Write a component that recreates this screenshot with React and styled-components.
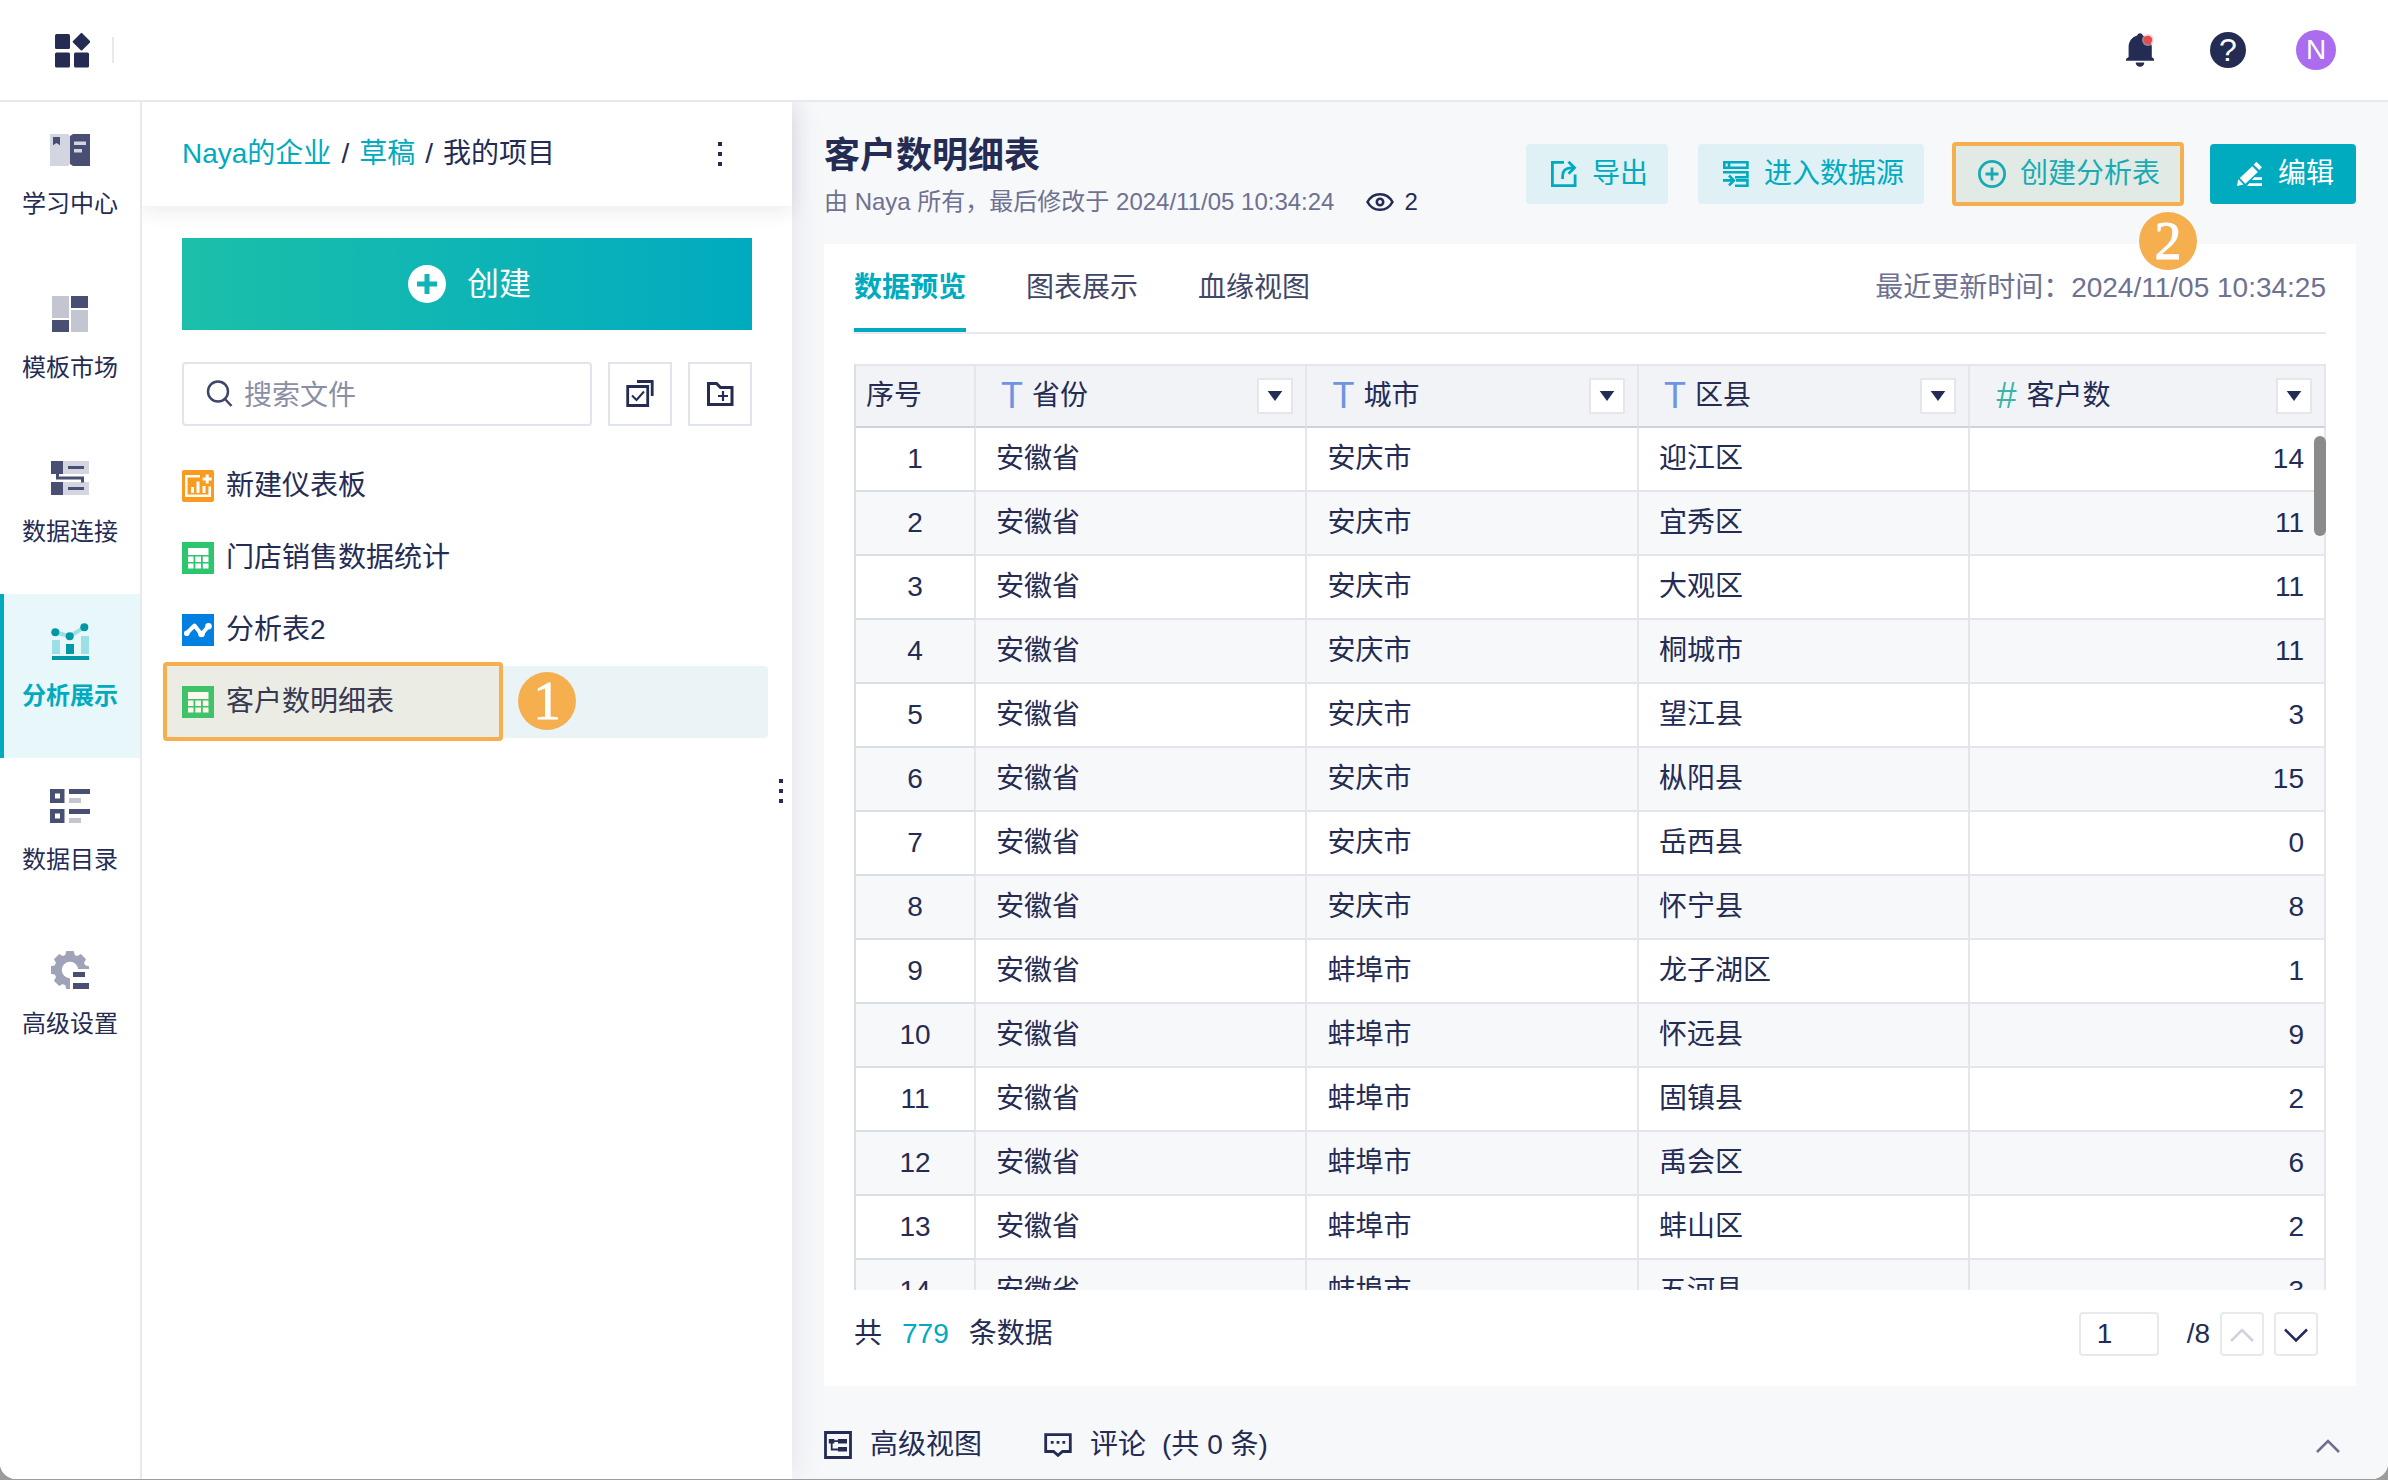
import React, { useState } from 'react';
import styled, { createGlobalStyle } from 'styled-components';

const GlobalStyle = createGlobalStyle`
    *{
        box-sizing: border-box;
    }
    body{
        margin: 0;
        background-color: #9c9c9c;
        color: #242c54;
        font-family: "Liberation Sans", "Noto Sans CJK SC", sans-serif;
        font-size: 28px;
        line-height: 40px;
    }
    button, input{
        font: inherit;
        color: inherit;
    }
    button{
        padding: 0;
        border: 0;
        background: none;
        cursor: pointer;
    }
    a{
        color: inherit;
        text-decoration: none;
    }
    svg{
        display: block;
        flex: none;
    }
`;

const DARK = '#484f72'
const LIGHT = '#d3d6e0'
const GREY = '#c3c5d1'

// ---- icons ----

const LogoIcon = () => (
    <svg width="36" height="36" viewBox="0 0 36 36" fill="#242c54">
        <rect x="1" y="2" width="15" height="15" rx="1.5" />
        <rect x="1" y="20.5" width="15" height="15" rx="1.5" />
        <rect x="20" y="20.5" width="15" height="15" rx="1.5" />
        <rect x="21" y="3.2" width="13" height="13" rx="1" transform="rotate(45 27.5 9.7)" />
    </svg>
)

const BellIcon = () => (
    <svg width="40" height="40" viewBox="0 0 40 40">
        <path fill="#242c54" d="M20 3.2c1.5 0 2.6 1 2.8 2.4 5.300 1.300 9 5.800 9 11.400v10l2.200 2v1.800H6V29l2.600-2V17c0-5.600 3.600-10.100 8.600-11.400.2-1.400 1.300-2.400 2.800-2.400z" />
        <path fill="#242c54" d="M15.700 32.500h8.600a4.300 4.300 0 0 1-8.600 0z" />
        <circle cx="28" cy="10" r="6" fill="#f5b9bf" opacity=".6" />
        <circle cx="28" cy="10" r="4.200" fill="#e8494d" />
    </svg>
)

const LearnIcon = () => (
    <svg width="40" height="40" viewBox="0 0 40 40">
        <path fill={LIGHT} d="M0 4h18l2 2v28l-2 2H0z" />
        <path fill={DARK} d="M40.500 4H23l-3 2v28l3 2h17.500z" />
        <path fill={DARK} d="M3 7h7v8.200L6.500 13 3 15.200z" />
        <path fill={LIGHT} d="M24 11.500h12V15H24zM24 19h8v3.500h-8z" />
    </svg>
)

const TemplateIcon = () => (
    <svg width="40" height="40" viewBox="0 0 40 40">
        <path fill={GREY} d="M2 2h17v22H2zM21 16h17v22H21z" />
        <path fill={DARK} d="M21 2h17v12H21zM2 26h17v12H2z" />
    </svg>
)

const ConnectIcon = () => (
    <svg width="40" height="40" viewBox="0 0 40 40">
        <path fill={LIGHT} d="M13 3h26v13H13zM13 24h26v13H13z" />
        <path fill={DARK} d="M1 3h12v13H1zM1 24h12v13H1zM18 8h16v3H18zM18 29h16v3H18z" />
        <path stroke={DARK} strokeWidth="3" fill="none" d="M7.500 15v5h25v4.500" />
    </svg>
)

const AnalysisIcon = () => (
    <svg width="40" height="40" viewBox="0 0 40 40">
        <path fill="#9ce0e6" d="M2 18h8v14H2zM31 14h8v18h-8z" />
        <path stroke="#9ce0e6" strokeWidth="4" fill="none" d="M5.300 10.300l14.400 4 14.600-9" />
        <path fill="#0097a7" d="M16 22h8v10h-8zM2 34h37v4H2z" />
        <circle cx="5.300" cy="10.300" r="4" fill="#0097a7" />
        <circle cx="19.700" cy="14.300" r="4" fill="#0097a7" />
        <circle cx="34.300" cy="5.300" r="4" fill="#0097a7" />
    </svg>
)

const CatalogIcon = () => (
    <svg width="40" height="40" viewBox="0 0 40 40">
        <path fill={DARK} fillRule="evenodd" d="M0 3h14.500v14H0zM5 7.500v5h5v-5zM0 23h14.500v14H0zM5 27.500v5h5v-5z" />
        <path fill={DARK} d="M19 3h21v5H19zM19 23h21v5H19z" />
        <path fill={GREY} d="M19 12h12v5H19zM19 32h12v5H19z" />
    </svg>
)

const SettingsIcon = () => (
    <svg width="40" height="40" viewBox="0 0 40 40">
        <circle cx="20" cy="20" r="12" fill="none" stroke="#a0a3b8" strokeWidth="7.500" />
        {[0, 45, 90, 135, 180, 225, 270, 315].map(angle => (
            <path key={angle} fill="#a0a3b8" d="M15 6l1.300-5h7.400L25 6z" transform={`rotate(${angle} 20 20)`} />
        ))}
        <path fill="#fff" d="M20 19h20v21H20z" />
        <path fill={DARK} d="M23 22h12v5H23zM23 33h16v6H23z" />
    </svg>
)

const MoreIcon = () => (
    <svg width="28" height="28" viewBox="0 0 28 28" fill="#242c54">
        <path d="M12 2h4v4h-4zM12 12h4v4h-4zM12 22h4v4h-4z" />
    </svg>
)

const CreateIcon = () => (
    <svg width="40" height="40" viewBox="0 0 40 40">
        <circle cx="20" cy="20" r="19" fill="#fff" />
        <path stroke="#0fb5b4" strokeWidth="5" d="M20 10v20M10 20h20" />
    </svg>
)

const SearchIcon = () => (
    <svg width="28" height="28" viewBox="0 0 28 28" fill="none" stroke="#3f4668" strokeWidth="2.500">
        <circle cx="12" cy="11.500" r="10" />
        <path d="M18.500 18.500l7 7.500" />
    </svg>
)

const BatchIcon = () => (
    <svg width="28" height="28" viewBox="0 0 28 28" fill="none" stroke="#242c54">
        <path strokeWidth="2.800" d="M1.700 6.500h20v19h-20zM11 1.500h15.200V16" />
        <path strokeWidth="2" d="M6 15.500l4.500 4.500 7.500-8.500" />
    </svg>
)

const FolderIcon = () => (
    <svg width="28" height="28" viewBox="0 0 28 28" fill="none" stroke="#242c54">
        <path strokeWidth="3" d="M2.500 3.500h8l4 4H26v17H2.500z" />
        <path strokeWidth="2.200" d="M17 11v10M12 16h10" />
    </svg>
)

const DashboardFileIcon = () => (
    <svg width="32" height="32" viewBox="0 0 32 32">
        <rect width="32" height="32" rx="2" fill="#fa9a1e" />
        <path stroke="#fff" strokeWidth="2.500" fill="none" d="M18 6.300H4.300v19.400h23.400V16.500" />
        <path stroke="#fff" strokeWidth="3" d="M25.200 4.500v9M20.700 9h9" />
        <path fill="#fff" d="M9 17h3v6H9zM14.500 11.500h3V23h-3zM20.500 16h3v7h-3z" />
    </svg>
)

const TableFileIcon = () => (
    <svg width="32" height="32" viewBox="0 0 32 32">
        <rect width="32" height="32" fill="#2bc66e" />
        <path fill="#fff" d="M6 6h20.500v7H6zM6 14.500h5.500v5.500H6zM13.300 14.500h5.700v5.500h-5.700zM20.800 14.500h5.700v5.500h-5.700zM6 21.500h5.500V26.500H6zM13.300 21.500h5.700v5h-5.700zM20.800 21.500h5.700v5h-5.700z" />
    </svg>
)

const AnalysisFileIcon = () => (
    <svg width="32" height="32" viewBox="0 0 32 32">
        <rect width="32" height="32" fill="#0080e1" />
        <path stroke="#fff" strokeWidth="4" strokeLinecap="round" strokeLinejoin="round" fill="none" d="M4.500 19.500L12.500 11.500 19.500 20.500 26.500 12" />
        <circle cx="4.800" cy="19.200" r="2.800" fill="#fff" />
        <circle cx="19.500" cy="20" r="3.300" fill="#fff" />
        <circle cx="26.500" cy="12.300" r="3.300" fill="#fff" />
    </svg>
)

const EyeIcon = () => (
    <svg width="28" height="28" viewBox="0 0 28 28" fill="none" stroke="#242c54">
        <path strokeWidth="2.600" d="M1.500 14C4.500 8.500 9 6.200 14 6.200S23.500 8.500 26.500 14C23.500 19.500 19 21.800 14 21.800S4.500 19.500 1.500 14z" />
        <circle cx="14" cy="14" r="3.200" strokeWidth="2.600" />
    </svg>
)

const ExportIcon = () => (
    <svg width="28" height="28" viewBox="0 0 28 28" fill="none" stroke="currentColor" strokeWidth="2.800">
        <path d="M14 2.400H2.400v23.200h22.700V14.500" />
        <path d="M12.600 19v-3c0-5 2.900-8.200 8.400-8.200h3" />
        <path d="M18.500 1.800l6 6-6 6" />
    </svg>
)

const SourceIcon = () => (
    <svg width="28" height="28" viewBox="0 0 28 28" fill="none" stroke="currentColor" strokeWidth="2.600">
        <path d="M2.300 2.300h23.100v5.400H2.300zM7 2v6" />
        <path d="M1 12.300h24.400v5H13M14 20.400h11.400v5.300H13" />
        <path d="M1 20.400h11M7 15.500l4.900 4.900L7 25.300" />
    </svg>
)

const PlusCircleIcon = () => (
    <svg width="28" height="28" viewBox="0 0 28 28" fill="none" stroke="currentColor" strokeWidth="2.800">
        <circle cx="14" cy="14" r="12.600" />
        <path d="M14 7.500v13M7.500 14h13" />
    </svg>
)

const EditIcon = () => (
    <svg width="28" height="28" viewBox="0 0 28 28" fill="currentColor">
        <path d="M16.300 6.300l5.500 5.800L9.300 23.700 3.800 17.900z" />
        <path d="M20.300 1.800L26 7.300l-2.700 2.800-5.600-5.400z" />
        <path d="M2.300 19.300l5.300 5.300L1 26z" />
        <path d="M13.300 23.300H26V26H11zM18.300 17.300H26V20h-10z" />
    </svg>
)

const ViewIcon = () => (
    <svg width="28" height="28" viewBox="0 0 28 28">
        <path fill="none" stroke="#242c54" strokeWidth="2.800" d="M1.500 1.500h25v25h-25z" />
        <path fill="#242c54" d="M4.800 8h5.500v4.500H4.800zM14 8h9v4.500h-9zM14 16h9v4.500h-9z" />
        <path fill="none" stroke="#242c54" strokeWidth="1.800" d="M9 10.200h6M7.700 12v6.500H15" />
    </svg>
)

const CommentIcon = () => (
    <svg width="28" height="28" viewBox="0 0 28 28">
        <path fill="none" stroke="#242c54" strokeWidth="2.800" d="M1.700 3.600h24.600V20.500h-7.800L14 24.300l-4.500-3.800H1.700z" />
        <path fill="#242c54" d="M6.800 10h2.800v2.800H6.800zM12.600 10h2.800v2.800h-2.800zM18.400 10h2.800v2.800h-2.800z" />
    </svg>
)

const Chevron = ({ down, color }) => (
    <svg width="24" height="24" viewBox="0 0 24 24" fill="none" stroke={color} strokeWidth="2.600">
        <path d={down ? 'M1 7.500l11 11 11-11' : 'M1 19l11-11 11 11'} />
    </svg>
)

const Caret = () => (
    <svg width="16" height="10" viewBox="0 0 16 10" fill="#242c54">
        <path d="M.7 0h14.600L8 10z" />
    </svg>
)

// ---- data ----

const navItems = [
    { name: '学习中心', icon: <LearnIcon /> },
    { name: '模板市场', icon: <TemplateIcon /> },
    { name: '数据连接', icon: <ConnectIcon /> },
    { name: '分析展示', icon: <AnalysisIcon />, active: true },
    { name: '数据目录', icon: <CatalogIcon /> },
    { name: '高级设置', icon: <SettingsIcon /> },
]

const files = [
    { name: '新建仪表板', icon: <DashboardFileIcon /> },
    { name: '门店销售数据统计', icon: <TableFileIcon /> },
    { name: '分析表2', icon: <AnalysisFileIcon /> },
    { name: '客户数明细表', icon: <TableFileIcon />, active: true },
]

const tabs = ['数据预览', '图表展示', '血缘视图']

const columns = [
    { name: '省份', type: 'T' },
    { name: '城市', type: 'T' },
    { name: '区县', type: 'T' },
    { name: '客户数', type: '#' },
]

const rows = [
    ['安徽省', '安庆市', '迎江区', 14],
    ['安徽省', '安庆市', '宜秀区', 11],
    ['安徽省', '安庆市', '大观区', 11],
    ['安徽省', '安庆市', '桐城市', 11],
    ['安徽省', '安庆市', '望江县', 3],
    ['安徽省', '安庆市', '枞阳县', 15],
    ['安徽省', '安庆市', '岳西县', 0],
    ['安徽省', '安庆市', '怀宁县', 8],
    ['安徽省', '蚌埠市', '龙子湖区', 1],
    ['安徽省', '蚌埠市', '怀远县', 9],
    ['安徽省', '蚌埠市', '固镇县', 2],
    ['安徽省', '蚌埠市', '禹会区', 6],
    ['安徽省', '蚌埠市', '蚌山区', 2],
    ['安徽省', '蚌埠市', '五河县', 3],
]

function Sidebar() {
    return (
        <SidebarStyled>
            {navItems.map(item => (
                <NavItem href="#" key={item.name} $active={item.active}>
                    {item.icon}
                    <span>{item.name}</span>
                </NavItem>
            ))}
        </SidebarStyled>
    )
}

function ProjectPanel() {
    return (
        <ProjectStyled>
            <ProjectHeader>
                <Breadcrumb>
                    <a href="#">Naya的企业</a>
                    <span>/</span>
                    <a href="#">草稿</a>
                    <span>/</span>
                    <span>我的项目</span>
                </Breadcrumb>
                <button aria-label="更多"><MoreIcon /></button>
            </ProjectHeader>
            <ProjectTools>
                <CreateButton>
                    <CreateIcon />
                    创建
                </CreateButton>
                <SearchRow>
                    <SearchBox>
                        <SearchIcon />
                        <input type="text" placeholder="搜索文件" aria-label="搜索文件" />
                    </SearchBox>
                    <SquareButton aria-label="批量选择"><BatchIcon /></SquareButton>
                    <SquareButton aria-label="新建文件夹"><FolderIcon /></SquareButton>
                </SearchRow>
            </ProjectTools>
            <FileList>
                {files.map(file => (
                    <li key={file.name}>
                        <FileLink href="#" $active={file.active}>
                            {file.icon}
                            {file.name}
                            {file.active && <FileMark />}
                            {file.active && <FileStep>1</FileStep>}
                        </FileLink>
                    </li>
                ))}
            </FileList>
            <DragHandle>
                <i /><i /><i />
            </DragHandle>
        </ProjectStyled>
    )
}

function DataTable() {
    return (
        <TableWrap>
            <Table>
                <colgroup>
                    <col className="index" />
                    <col className="text" />
                    <col className="text" />
                    <col className="text" />
                    <col />
                </colgroup>
                <thead>
                    <tr>
                        <th className="index">序号</th>
                        {columns.map(column => (
                            <th key={column.name}>
                                <HeadCell>
                                    <TypeMark $number={column.type === '#'}>{column.type}</TypeMark>
                                    <span>{column.name}</span>
                                    <FilterButton aria-label={`筛选${column.name}`}><Caret /></FilterButton>
                                </HeadCell>
                            </th>
                        ))}
                    </tr>
                </thead>
                <tbody>
                    {rows.map((row, index) => (
                        <tr key={index}>
                            <td className="index">{index + 1}</td>
                            <td>{row[0]}</td>
                            <td>{row[1]}</td>
                            <td>{row[2]}</td>
                            <td className="number">{row[3]}</td>
                        </tr>
                    ))}
                </tbody>
            </Table>
            <ScrollThumb />
        </TableWrap>
    )
}

function App() {
    const [tab, setTab] = useState(tabs[0])
    const [page, setPage] = useState('1')

    return (
        <Window>
            <GlobalStyle />
            <TopBar>
                <LogoIcon />
                <Divider />
                <TopActions>
                    <button aria-label="通知"><BellIcon /></button>
                    <HelpButton>?</HelpButton>
                    <Avatar>N</Avatar>
                </TopActions>
            </TopBar>
            <Body>
                <Sidebar />
                <ProjectPanel />
                <Main>
                    <MainHeader>
                        <div>
                            <h1>客户数明细表</h1>
                            <Meta>
                                <span>由 Naya 所有，最后修改于 2024/11/05 10:34:24</span>
                                <Views><EyeIcon />2</Views>
                            </Meta>
                        </div>
                        <Actions>
                            <ActionButton><ExportIcon />导出</ActionButton>
                            <ActionButton><SourceIcon />进入数据源</ActionButton>
                            <ActionButton>
                                <PlusCircleIcon />创建分析表
                                <ActionMark />
                                <ActionStep>2</ActionStep>
                            </ActionButton>
                            <ActionButton $primary><EditIcon />编辑</ActionButton>
                        </Actions>
                    </MainHeader>
                    <Card>
                        <TabBar>
                            {tabs.map(name => (
                                <Tab key={name} $active={name === tab} onClick={() => setTab(name)}>{name}</Tab>
                            ))}
                            <UpdateTime>最近更新时间：2024/11/05 10:34:25</UpdateTime>
                        </TabBar>
                        <DataTable />
                        <CardFooter>
                            <Total>
                                <span>共</span>
                                <b>779</b>
                                <span>条数据</span>
                            </Total>
                            <Pager>
                                <input type="text" aria-label="页码" value={page} onChange={e => setPage(e.target.value)} />
                                <span>/8</span>
                                <PageButton aria-label="上一页"><Chevron color="#d0d3de" /></PageButton>
                                <PageButton aria-label="下一页"><Chevron down color="#242c54" /></PageButton>
                            </Pager>
                        </CardFooter>
                    </Card>
                    <BottomBar>
                        <BottomButton><ViewIcon />高级视图</BottomButton>
                        <BottomButton>
                            <CommentIcon />
                            评论
                            <span>(共 0 条)</span>
                        </BottomButton>
                        <ExpandButton aria-label="展开"><Chevron color="#6e7191" /></ExpandButton>
                    </BottomBar>
                </Main>
            </Body>
        </Window>
    )
}

const Window = styled.div`
    display: flex;
    flex-direction: column;
    height: calc(100vh - 1px);
    background-color: #fff;
    border-radius: 0 0 16px 16px;
    overflow: hidden;
`;

const TopBar = styled.header`
    position: relative;
    z-index: 3;
    display: flex;
    align-items: center;
    flex: none;
    height: 102px;
    padding: 0 52px 0 54px;
    border-bottom: 2px solid #e8e9ee;
    background-color: #fff;
`;

const Divider = styled.div`
    width: 2px;
    height: 26px;
    margin-left: 22px;
    background-color: #e8e9ee;
`;

const TopActions = styled.div`
    display: flex;
    align-items: center;
    gap: 48px;
    margin-left: auto;
`;

const HelpButton = styled.button`
    width: 36px;
    height: 36px;
    margin: 0 2px;
    border-radius: 50%;
    background-color: #242c54;
    color: #fff;
    font-size: 32px;
    line-height: 36px;
`;

const Avatar = styled.button`
    width: 40px;
    height: 40px;
    border-radius: 50%;
    background-color: #ab6cef;
    color: #fff;
`;

const Body = styled.div`
    display: flex;
    flex: 1;
    min-height: 0;
`;

const SidebarStyled = styled.nav`
    position: relative;
    z-index: 2;
    flex: none;
    width: 142px;
    border-right: 2px solid #e8e9ee;
    background-color: #fff;
`;

const NavItem = styled.a`
    display: flex;
    flex-direction: column;
    align-items: center;
    gap: 16px;
    height: 164px;
    padding-top: 28px;
    font-size: 24px;
    line-height: 36px;
    font-weight: ${props => props.$active ? 700 : 400};
    color: ${props => props.$active ? '#00abc0' : '#242c54'};
    background-color: ${props => props.$active ? '#e8f7f9' : 'transparent'};
    box-shadow: ${props => props.$active ? 'inset 4px 0 0 #00abc0' : 'none'};
`;

const ProjectStyled = styled.section`
    position: relative;
    z-index: 1;
    flex: none;
    width: 650px;
    background-color: #fff;
    box-shadow: 0 0 32px rgba(36, 44, 84, 0.1);
`;

const ProjectHeader = styled.div`
    display: flex;
    align-items: center;
    justify-content: space-between;
    height: 104px;
    padding: 0 58px 0 40px;
    box-shadow: 0 4px 20px rgba(36, 44, 84, 0.1);
`;

const Breadcrumb = styled.div`
    display: flex;
    gap: 10px;
    a{
        color: #00abc0;
    }
`;

const ProjectTools = styled.div`
    padding: 32px 40px 24px;
`;

const CreateButton = styled.button`
    display: flex;
    align-items: center;
    justify-content: center;
    gap: 20px;
    width: 100%;
    height: 92px;
    margin-bottom: 32px;
    padding-left: 4px;
    background: linear-gradient(90deg, #1cbfa9, #00abc0);
    color: #fff;
    font-size: 32px;
`;

const SearchRow = styled.div`
    display: flex;
    gap: 16px;
`;

const SearchBox = styled.label`
    display: flex;
    flex: 1;
    align-items: center;
    gap: 10px;
    min-width: 0;
    height: 64px;
    padding: 0 22px;
    border: 2px solid #e1e4ec;
    border-radius: 4px;
    input{
        flex: 1;
        min-width: 0;
        padding: 4px 0 0;
        border: 0;
        outline: 0;
    }
    input::placeholder{
        color: #8b8fa6;
    }
`;

const SquareButton = styled.button`
    display: flex;
    align-items: center;
    justify-content: center;
    width: 64px;
    height: 64px;
    border: 2px solid #e1e4ec;
`;

const FileList = styled.ul`
    margin: 0;
    padding: 0 24px;
    list-style: none;
`;

const FileLink = styled.a`
    position: relative;
    display: flex;
    align-items: center;
    gap: 12px;
    height: 72px;
    padding: 0 16px;
    border-radius: 4px;
    background-color: ${props => props.$active ? '#eaf4f7' : 'transparent'};
`;

const Mark = styled.i`
    position: absolute;
    border: 4px solid #f5af4e;
    border-radius: 4px;
    background-color: rgba(245, 175, 78, 0.1);
`;

const FileMark = styled(Mark)`
    top: -4px;
    bottom: -3px;
    left: -3px;
    width: 340px;
`;

const ActionMark = styled(Mark)`
    inset: -2px -4px -2px -2px;
`;

const Step = styled.span`
    position: absolute;
    z-index: 2;
    width: 58px;
    height: 58px;
    border-radius: 50%;
    background-color: #f5af4e;
    color: #fff;
    font-family: "Liberation Serif", serif;
    font-size: 54px;
    line-height: 58px;
    text-align: center;
    -webkit-text-stroke: 1px #fff;
`;

const FileStep = styled(Step)`
    top: 6px;
    left: 352px;
`;

const ActionStep = styled(Step)`
    top: 68px;
    right: -17px;
`;

const DragHandle = styled.div`
    position: absolute;
    top: 0;
    right: 9px;
    bottom: 0;
    display: flex;
    flex-direction: column;
    justify-content: center;
    gap: 6px;
    i{
        width: 4px;
        height: 4px;
        background-color: #242c54;
    }
`;

const Main = styled.main`
    display: flex;
    flex: 1;
    flex-direction: column;
    min-width: 0;
    padding: 0 32px;
    background-color: #f7f8fa;
`;

const MainHeader = styled.div`
    display: flex;
    justify-content: space-between;
    flex: none;
    height: 142px;
    padding-top: 30px;
    h1{
        margin: 0 0 4px;
        font-size: 36px;
        line-height: 48px;
    }
`;

const Meta = styled.div`
    display: flex;
    gap: 32px;
    color: #6e7191;
    font-size: 24px;
    line-height: 36px;
`;

const Views = styled.span`
    display: flex;
    align-items: center;
    gap: 10px;
    color: #242c54;
`;

const Actions = styled.div`
    display: flex;
    gap: 30px;
    padding-top: 12px;
`;

const ActionButton = styled.button`
    position: relative;
    display: flex;
    align-items: center;
    gap: 14px;
    height: 60px;
    padding: ${props => props.$primary ? '0 22px 0 26px' : '0 20px 0 24px'};
    border-radius: 4px;
    background-color: ${props => props.$primary ? '#00abc0' : '#dff1f5'};
    color: ${props => props.$primary ? '#fff' : '#00abc0'};
    white-space: nowrap;
`;

const Card = styled.div`
    display: flex;
    flex: 1;
    flex-direction: column;
    min-height: 0;
    padding: 0 30px;
    background-color: #fff;
`;

const TabBar = styled.div`
    display: flex;
    align-items: center;
    gap: 60px;
    flex: none;
    margin-bottom: 30px;
    border-bottom: 2px solid #e8e9ee;
`;

const Tab = styled.button`
    height: 88px;
    border-top: 4px solid transparent;
    border-bottom: 4px solid ${props => props.$active ? '#00abc0' : 'transparent'};
    color: ${props => props.$active ? '#00abc0' : '#3f4668'};
    font-weight: ${props => props.$active ? 700 : 400};
`;

const UpdateTime = styled.span`
    margin-left: auto;
    color: #6e7191;
`;

const TableWrap = styled.div`
    position: relative;
    flex: 1;
    min-height: 0;
    overflow: hidden;
    border-top: 2px solid #e5e6eb;
    border-left: 2px solid #dcdee5;
`;

const Table = styled.table`
    width: 100%;
    table-layout: fixed;
    border-spacing: 0;
    col.index{
        width: 120px;
    }
    col.text{
        width: 22.55%;
    }
    th, td{
        padding: 0 20px;
        border-right: 2px solid #e5e6eb;
        border-bottom: 2px solid #e5e6eb;
        text-align: left;
    }
    th{
        height: 62px;
        padding: 0 12px 0 24px;
        border-bottom-color: #cfd2da;
        background-color: #f2f3f7;
        font-weight: 400;
    }
    th.index{
        padding: 0 10px;
    }
    td{
        height: 64px;
    }
    td.index{
        border-bottom-color: #dcdee5;
        text-align: center;
    }
    td.number{
        text-align: right;
    }
    tbody tr:nth-child(even){
        background-color: #f7f8fa;
    }
`;

const HeadCell = styled.div`
    display: flex;
    align-items: center;
    gap: 8px;
`;

const TypeMark = styled.span`
    width: 24px;
    color: ${props => props.$number ? '#37b5a9' : '#6f94e0'};
    font-size: 36px;
    text-align: center;
`;

const FilterButton = styled.button`
    display: flex;
    align-items: center;
    justify-content: center;
    width: 36px;
    height: 36px;
    margin-left: auto;
    border: 2px solid #e5e6eb;
    background-color: #fff;
`;

const ScrollThumb = styled.div`
    position: absolute;
    top: 70px;
    right: 0;
    width: 12px;
    height: 100px;
    border-radius: 6px;
    background-color: #8b8b8b;
`;

const CardFooter = styled.div`
    display: flex;
    align-items: center;
    justify-content: space-between;
    flex: none;
    padding: 22px 8px 30px 0;
`;

const Total = styled.div`
    display: flex;
    gap: 20px;
    b{
        color: #00abc0;
        font-weight: 400;
    }
`;

const Pager = styled.div`
    display: flex;
    align-items: center;
    gap: 10px;
    input{
        width: 80px;
        height: 44px;
        margin-right: 18px;
        padding: 0 16px;
        border: 2px solid #e8e9ee;
        border-radius: 4px;
        outline: 0;
    }
`;

const PageButton = styled.button`
    display: flex;
    align-items: center;
    justify-content: center;
    width: 44px;
    height: 44px;
    border: 2px solid #e8e9ee;
    border-radius: 4px;
`;

const BottomBar = styled.footer`
    display: flex;
    align-items: center;
    gap: 62px;
    flex: none;
    height: 93px;
    padding-top: 24px;
`;

const BottomButton = styled.button`
    display: flex;
    align-items: center;
    gap: 18px;
    span{
        margin-left: -2px;
    }
`;

const ExpandButton = styled.button`
    margin-left: auto;
    padding-right: 16px;
`;

export default App;
